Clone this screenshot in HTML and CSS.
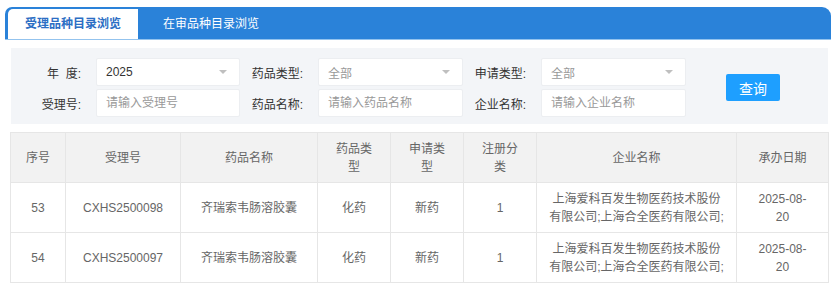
FILE: index.html
```html
<!DOCTYPE html>
<html lang="zh-CN">
<head>
  <meta charset="UTF-8">
  <title>品种目录浏览</title>
  <link rel="stylesheet" href="styles.css">
</head>
<body>
  <div class="tabs">
    <div class="tab active">受理品种目录浏览</div>
    <div class="tab">在审品种目录浏览</div>
  </div>

  <div class="filter">
    <div class="filter-grid">
      <label class="lbl">年&nbsp;&nbsp;度:</label>
      <div class="field select"><span class="value">2025</span><i class="arrow"></i></div>
      <label class="lbl">药品类型:</label>
      <div class="field select"><span class="ph">全部</span><i class="arrow"></i></div>
      <label class="lbl">申请类型:</label>
      <div class="field select"><span class="ph">全部</span><i class="arrow"></i></div>

      <label class="lbl">受理号:</label>
      <input class="field" placeholder="请输入受理号">
      <label class="lbl">药品名称:</label>
      <input class="field" placeholder="请输入药品名称">
      <label class="lbl">企业名称:</label>
      <input class="field" placeholder="请输入企业名称">
    </div>
    <button class="btn-query">查询</button>
  </div>

  <table class="list">
    <colgroup>
      <col style="width:55px">
      <col style="width:115px">
      <col style="width:137px">
      <col style="width:73px">
      <col style="width:73px">
      <col style="width:73px">
      <col style="width:200px">
      <col style="width:92px">
    </colgroup>
    <thead>
      <tr>
        <th>序号</th>
        <th>受理号</th>
        <th>药品名称</th>
        <th>药品类型</th>
        <th>申请类型</th>
        <th>注册分类</th>
        <th class="wide">企业名称</th>
        <th>承办日期</th>
      </tr>
    </thead>
    <tbody>
      <tr>
        <td>53</td>
        <td>CXHS2500098</td>
        <td>齐瑞索韦肠溶胶囊</td>
        <td>化药</td>
        <td>新药</td>
        <td>1</td>
        <td class="wide">上海爱科百发生物医药技术股份有限公司;上海合全医药有限公司;</td>
        <td>2025-08-<wbr>20</td>
      </tr>
      <tr>
        <td>54</td>
        <td>CXHS2500097</td>
        <td>齐瑞索韦肠溶胶囊</td>
        <td>化药</td>
        <td>新药</td>
        <td>1</td>
        <td class="wide">上海爱科百发生物医药技术股份有限公司;上海合全医药有限公司;</td>
        <td>2025-08-<wbr>20</td>
      </tr>
    </tbody>
  </table>
</body>
</html>
```

FILE: styles.css
```css
body {
  margin: 0;
  font-family: "Liberation Sans", "Noto Sans CJK SC", sans-serif;
  font-size: 12px;
  color: #333;
  background: #fff;
}

/* tabs */
.tabs {
  display: flex;
  height: 30px;
  margin: 7px 7px 0 5px;
  padding: 2px 0 0 3px;
  background: #2a82d9;
  border-radius: 7px 9px 0 0;
  border-bottom: 1px solid #93c3ee;
}

.tab {
  line-height: 31px;
  padding: 0 0 0 25px;
  color: #fff;
  font-size: 12px;
}

.tab.active {
  width: 130px;
  padding: 0;
  text-align: center;
  background: #fff;
  color: #2c6ec4;
  font-weight: bold;
  border-radius: 5px 0 0 0;
}

/* filter */
.filter {
  display: flex;
  align-items: center;
  margin: 8px 10px 0 11px;
  padding: 10px 0 7px;
  background: #f3f5f8;
}

.filter-grid {
  display: grid;
  grid-template-columns: 85px 144px 78px 145px 78px 145px;
  grid-auto-rows: 28px;
  row-gap: 3px;
}

.lbl {
  align-self: center;
  text-align: right;
  padding-right: 15px;
  color: #333;
}

.field {
  box-sizing: border-box;
  height: 28px;
  padding: 0 9px;
  border: 1px solid #eceef1;
  border-radius: 2px;
  background: #fff;
  font: inherit;
  color: #333;
  outline: none;
}

.field::placeholder,
.ph {
  color: #999;
}

.select {
  display: flex;
  align-items: center;
  justify-content: space-between;
}

.arrow {
  width: 0;
  height: 0;
  margin-right: 3px;
  border-left: 4px solid transparent;
  border-right: 4px solid transparent;
  border-top: 4px solid #bfbfbf;
}

.btn-query {
  margin-left: 40px;
  width: 54px;
  height: 27px;
  border: none;
  border-radius: 2px;
  background: #1e9fff;
  color: #fff;
  font-family: inherit;
  font-size: 14px;
  cursor: pointer;
}

/* table */
.list {
  width: 818px;
  margin: 8px 0 0 10px;
  border-collapse: collapse;
  table-layout: fixed;
  color: #666;
}

.list th,
.list td {
  height: 49px;
  padding: 0 15px;
  border: 1px solid #e6e6e6;
  text-align: center;
  line-height: 18px;
  font-weight: normal;
}

.list .wide {
  padding: 0 11px;
}

.list th {
  background: #f2f2f2;
}
```
